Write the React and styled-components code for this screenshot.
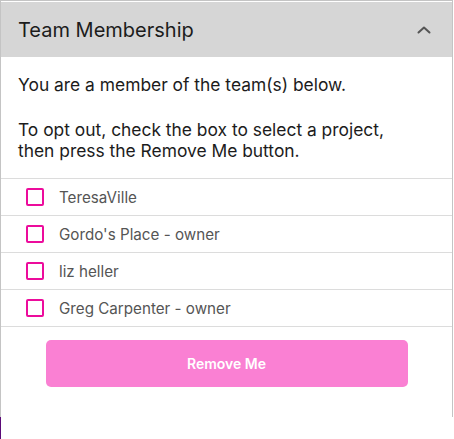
import React from "react";
import styled, { createGlobalStyle } from "styled-components";

const Global = createGlobalStyle`
  html, body { margin: 0; padding: 0; background: #fff; }
  body { font-family: Inter, "Noto Sans", sans-serif; }
`;

const Card = styled.section`
  width: 451px;
  min-height: 415px;
  border: 1px solid #c4c4c4;
  border-bottom: none;
  padding-top: 1px;
  background: #fff;
  display: flex;
  flex-direction: column;
`;

const Header = styled.div`
  height: 55px;
  background: #d6d6d6;
  display: flex;
  align-items: center;
  justify-content: space-between;
  padding: 0 21px 0 17px;
`;

const Title = styled.h2`
  margin: 0;
  font-size: 20px;
  font-weight: 400;
  color: #1c1c1c;
`;

const Body = styled.div`
  padding: 17px 17px 17px 17px;
  color: #1c1c1c;
  font-size: 17.4px;
  line-height: 21px;
`;

const Para = styled.p`
  margin: 0;
  max-width: 385px;
  & + & { margin-top: 24px; }
`;

const List = styled.ul`
  list-style: none;
  margin: 0;
  padding: 0;
  border-top: 1px solid #dcdcdc;
`;

const Row = styled.li`
  height: 36px;
  display: flex;
  align-items: center;
  gap: 15px;
  padding-left: 25px;
  border-bottom: 1px solid #dcdcdc;
  font-size: 15.2px;
  color: #555;
`;

const Box = styled.span`
  box-sizing: border-box;
  width: 18px;
  height: 18px;
  border: 2px solid #ec0c9c;
  border-radius: 2px;
  flex: none;
`;

const Actions = styled.div`
  display: flex;
  justify-content: center;
  padding-top: 13px;
`;

const Button = styled.button`
  width: 362px;
  height: 47px;
  border: none;
  border-radius: 5px;
  background: #fa80d3;
  color: #fff;
  font-family: Inter, "Noto Sans", sans-serif;
  font-size: 14px;
  font-weight: 600;
  cursor: pointer;
`;

const Tail = styled.div`
  width: 0;
  height: 24px;
  border-left: 1px solid #5b0a78;
`;

const teams = ["TeresaVille", "Gordo's Place - owner", "liz heller", "Greg Carpenter - owner"];

export default function App() {
  return (
    <>
      <Global />
      <Card>
        <Header>
          <Title>Team Membership</Title>
          <svg width="14" height="8" viewBox="0 0 14 8" fill="none">
            <polyline points="1.5,6.5 7,1.5 12.5,6.5" stroke="#555" strokeWidth="2" strokeLinecap="round" strokeLinejoin="round" />
          </svg>
        </Header>
        <Body>
          <Para>You are a member of the team(s) below.</Para>
          <Para>To opt out, check the box to select a project, then press the Remove Me button.</Para>
        </Body>
        <List>
          {teams.map((t) => (
            <Row key={t}>
              <Box />
              {t}
            </Row>
          ))}
        </List>
        <Actions>
          <Button>Remove Me</Button>
        </Actions>
      </Card>
      <Tail />
    </>
  );
}
